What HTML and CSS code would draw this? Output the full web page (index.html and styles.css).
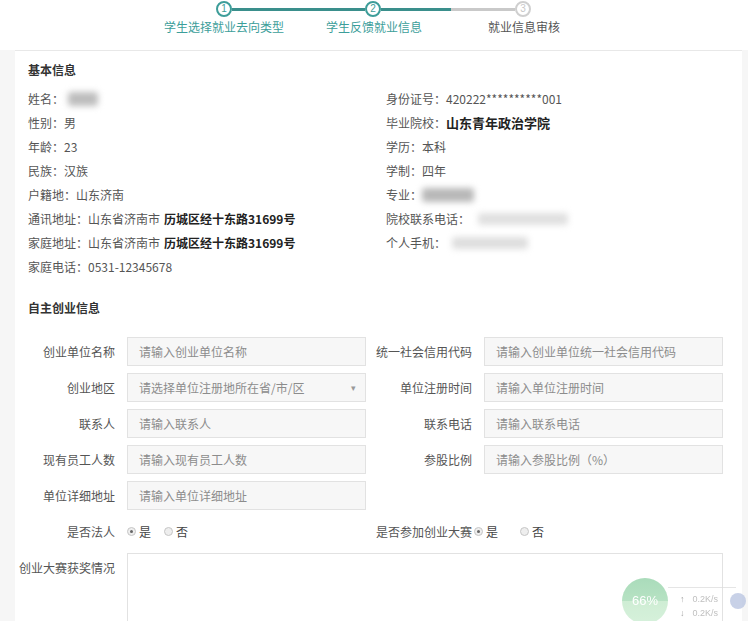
FILE: index.html
```html
<!DOCTYPE html>
<html lang="zh">
<head>
<meta charset="utf-8">
<link rel="stylesheet" href="styles.css">
</head>
<body>
<div class="stepper">
  <div class="step-track">
    <span class="circle done">1</span>
    <span class="line done-line"></span>
    <span class="circle done">2</span>
    <span class="line half-line"></span>
    <span class="circle todo">3</span>
  </div>
  <div class="step-labels">
    <span class="step-label done-text">学生选择就业去向类型</span>
    <span class="step-label done-text">学生反馈就业信息</span>
    <span class="step-label todo-text">就业信息审核</span>
  </div>
</div>

<div class="card">
  <div class="section-title">基本信息</div>
  <div class="info">
    <div class="info-col left-col">
      <div class="info-row">姓名：<span class="blur blur-name"></span></div>
      <div class="info-row">性别：男</div>
      <div class="info-row">年龄：23</div>
      <div class="info-row">民族：汉族</div>
      <div class="info-row">户籍地：山东济南</div>
      <div class="info-row">通讯地址：山东省济南市 <b>历城区经十东路31699号</b></div>
      <div class="info-row">家庭地址：山东省济南市 <b>历城区经十东路31699号</b></div>
      <div class="info-row">家庭电话：0531-12345678</div>
    </div>
    <div class="info-col">
      <div class="info-row">身份证号：420222**********001</div>
      <div class="info-row">毕业院校：<b class="big">山东青年政治学院</b></div>
      <div class="info-row">学历：本科</div>
      <div class="info-row">学制：四年</div>
      <div class="info-row">专业：<span class="blur blur-major"></span></div>
      <div class="info-row">院校联系电话：<span class="blur blur-phone"></span></div>
      <div class="info-row">个人手机：<span class="blur blur-mobile"></span></div>
    </div>
  </div>

  <div class="section-title second">自主创业信息</div>
  <div class="form">
    <div class="item"><label>创业单位名称</label><div class="input">请输入创业单位名称</div></div>
    <div class="item"><label>统一社会信用代码</label><div class="input">请输入创业单位统一社会信用代码</div></div>
    <div class="item"><label>创业地区</label><div class="input select">请选择单位注册地所在省/市/区<span class="caret">▾</span></div></div>
    <div class="item"><label>单位注册时间</label><div class="input">请输入单位注册时间</div></div>
    <div class="item"><label>联系人</label><div class="input">请输入联系人</div></div>
    <div class="item"><label>联系电话</label><div class="input">请输入联系电话</div></div>
    <div class="item"><label>现有员工人数</label><div class="input">请输入现有员工人数</div></div>
    <div class="item"><label>参股比例</label><div class="input">请输入参股比例（%）</div></div>
    <div class="item"><label>单位详细地址</label><div class="input">请输入单位详细地址</div></div>
    <div class="item"></div>
    <div class="item"><label>是否法人</label>
      <span class="radio checked"></span><span class="radio-text">是</span>
      <span class="radio"></span><span class="radio-text">否</span>
    </div>
    <div class="item"><label class="wide-label">是否参加创业大赛</label>
      <span class="radio checked"></span><span class="radio-text wide-gap">是</span>
      <span class="radio"></span><span class="radio-text">否</span>
    </div>
    <div class="item full"><label class="top-label">创业大赛获奖情况</label><div class="textarea"></div></div>
  </div>
</div>

<div class="speed">
  <div class="ball">66%</div>
  <div class="speed-panel">
    <div class="speed-row"><span class="arr">↑</span>0.2K/s</div>
    <div class="speed-row"><span class="arr">↓</span>0.2K/s</div>
  </div>
  <div class="dot"></div>
</div>
</body>
</html>
```
FILE: styles.css
```css
html, body {
  margin: 0;
  padding: 0;
}
body {
  width: 748px;
  height: 621px;
  overflow: hidden;
  background: #f6f6f6;
  font-family: "Noto Sans CJK SC", "Microsoft YaHei", sans-serif;
  font-size: 12px;
  color: #555;
  position: relative;
}

/* stepper */
.stepper {
  background: #fff;
  height: 50px;
  box-sizing: border-box;
  padding-top: 1px;
}
.step-track {
  display: flex;
  align-items: center;
  padding-left: 216px;
  height: 16px;
}
.circle {
  width: 16px;
  height: 16px;
  box-sizing: border-box;
  border-radius: 50%;
  border: 2px solid #3d9d99;
  color: #3d9d99;
  font-size: 10px;
  line-height: 12px;
  text-align: center;
  font-family: "Liberation Sans", sans-serif;
  flex: none;
}
.circle.todo {
  border-color: #cfcfcf;
  color: #c8c8c8;
}
.line {
  height: 3px;
  flex: none;
}
.done-line {
  width: 133px;
  background: #3a8f8c;
}
.half-line {
  width: 134px;
  background: linear-gradient(to right, #3a8f8c 0, #3a8f8c 70px, #c9c9c9 70px);
}
.step-labels {
  display: flex;
  padding-left: 149px;
  margin-top: 2px;
}
.step-label {
  width: 150px;
  text-align: center;
  line-height: 16px;
}
.done-text { color: #3c9e9a; }
.todo-text { color: #555; }

/* card */
.card {
  margin-left: 15px;
  width: 727px;
  background: #fff;
  border-top: 1px solid #e8e8e8;
  padding-top: 9px;
  height: 561px;
  overflow: hidden;
}
.section-title {
  padding-left: 13px;
  font-weight: bold;
  color: #333;
  line-height: 20px;
}
.section-title.second {
  margin-top: 19px;
}
.info {
  display: flex;
  padding-left: 13px;
  margin-top: 7px;
}
.info-col.left-col {
  width: 358px;
}
.info-row {
  line-height: 24px;
  height: 24px;
  display: flex;
  align-items: center;
  white-space: nowrap;
}
.info-row b {
  color: #222;
  margin-left: 4px;
}
.info-row b.big {
  font-size: 13px;
  margin-left: 0;
}
.blur {
  display: inline-block;
  background: #c4c4c4;
  filter: blur(3px);
  border-radius: 3px;
}
.blur-name { width: 30px; height: 14px; margin-left: 4px; background: #bdbdbd; }
.blur-major { width: 52px; height: 14px; background: #b8b8b8; }
.blur-phone { width: 90px; height: 12px; margin-left: 8px; background: #e0e0e0; }
.blur-mobile { width: 76px; height: 12px; margin-left: 6px; background: #dedede; }

/* form */
.form {
  margin-top: 19px;
  display: grid;
  grid-template-columns: 357px 357px;
  grid-auto-rows: 29px;
  row-gap: 7px;
}
.item {
  display: flex;
  align-items: center;
}
.item label {
  width: 100px;
  text-align: right;
  margin-right: 12px;
  color: #555;
  flex: none;
  white-space: nowrap;
}
.input {
  width: 239px;
  height: 29px;
  box-sizing: border-box;
  border: 1px solid #e2e2e2;
  background: #f7f7f7;
  color: #8c8c8c;
  padding-left: 11px;
  line-height: 27px;
  position: relative;
  white-space: nowrap;
}
.caret {
  position: absolute;
  right: 9px;
  top: 0;
  font-size: 9px;
  color: #999;
}
.radio {
  width: 9px;
  height: 9px;
  box-sizing: border-box;
  border-radius: 50%;
  border: 1px solid #c6c6c6;
  background: #eee;
  flex: none;
  position: relative;
}
.radio.checked::after {
  content: "";
  position: absolute;
  left: 2px;
  top: 2px;
  width: 3px;
  height: 3px;
  border-radius: 50%;
  background: #666;
}
.radio-text {
  margin-left: 3px;
  margin-right: 13px;
  color: #444;
}
.radio-text.wide-gap {
  margin-right: 22px;
}
.item .wide-label {
  margin-right: 2px;
}
.item.full {
  grid-column: 1 / 3;
  align-items: flex-start;
  height: 100px;
}
.item .top-label {
  line-height: 20px;
  padding-top: 5px;
}
.textarea {
  width: 596px;
  height: 100px;
  box-sizing: border-box;
  border: 1px solid #e2e2e2;
  background: #fff;
}

/* floating speed widget */
.speed {
  position: absolute;
  left: 622px;
  top: 578px;
  display: flex;
  align-items: center;
  opacity: 0.75;
}
.ball {
  width: 46px;
  height: 46px;
  border-radius: 50%;
  background: linear-gradient(#8ed0a4 0, #9fd9b0 50%, #bfe8c6 50%, #c9ecd0 100%);
  color: #fff;
  font-family: "Liberation Sans", sans-serif;
  font-size: 13px;
  line-height: 46px;
  text-align: center;
  flex: none;
}
.speed-panel {
  border-top: 1px solid #ddd;
  width: 56px;
  padding: 4px 0 0 12px;
  font-family: "Liberation Sans", sans-serif;
  font-size: 9px;
  color: #aaa;
  line-height: 14px;
  margin-top: 4px;
}
.arr {
  margin-right: 8px;
  color: #888;
}
.dot {
  width: 16px;
  height: 16px;
  border-radius: 50%;
  background: #b6c2e0;
  margin-left: -6px;
  flex: none;
}
```
